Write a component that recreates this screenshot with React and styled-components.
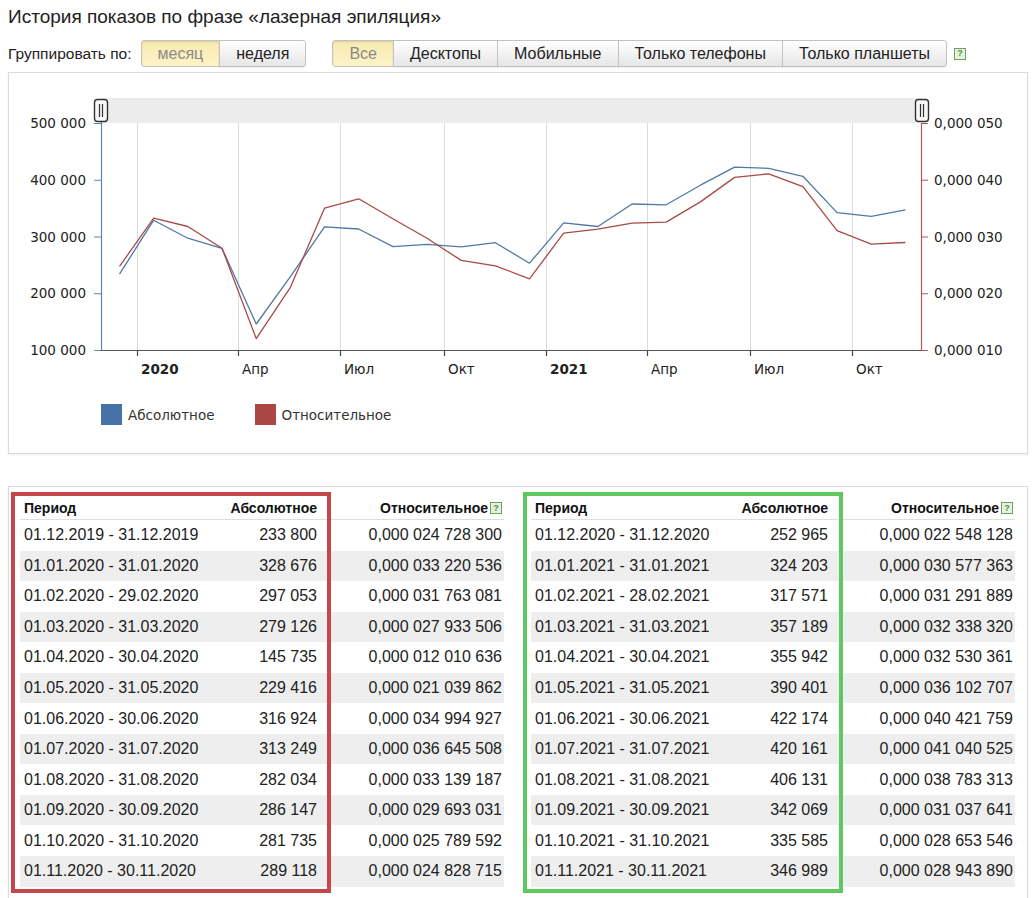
import React from 'react'
import styled, { createGlobalStyle } from 'styled-components'

const GlobalStyle = createGlobalStyle`
  body {
    margin: 0;
    background: #fff;
    color: #222;
    font-family: "Liberation Sans", Arial, sans-serif;
  }
`

const left = [
  ['01.12.2019 - 31.12.2019', '233 800', '0,000 024 728 300'],
  ['01.01.2020 - 31.01.2020', '328 676', '0,000 033 220 536'],
  ['01.02.2020 - 29.02.2020', '297 053', '0,000 031 763 081'],
  ['01.03.2020 - 31.03.2020', '279 126', '0,000 027 933 506'],
  ['01.04.2020 - 30.04.2020', '145 735', '0,000 012 010 636'],
  ['01.05.2020 - 31.05.2020', '229 416', '0,000 021 039 862'],
  ['01.06.2020 - 30.06.2020', '316 924', '0,000 034 994 927'],
  ['01.07.2020 - 31.07.2020', '313 249', '0,000 036 645 508'],
  ['01.08.2020 - 31.08.2020', '282 034', '0,000 033 139 187'],
  ['01.09.2020 - 30.09.2020', '286 147', '0,000 029 693 031'],
  ['01.10.2020 - 31.10.2020', '281 735', '0,000 025 789 592'],
  ['01.11.2020 - 30.11.2020', '289 118', '0,000 024 828 715'],
]

const right = [
  ['01.12.2020 - 31.12.2020', '252 965', '0,000 022 548 128'],
  ['01.01.2021 - 31.01.2021', '324 203', '0,000 030 577 363'],
  ['01.02.2021 - 28.02.2021', '317 571', '0,000 031 291 889'],
  ['01.03.2021 - 31.03.2021', '357 189', '0,000 032 338 320'],
  ['01.04.2021 - 30.04.2021', '355 942', '0,000 032 530 361'],
  ['01.05.2021 - 31.05.2021', '390 401', '0,000 036 102 707'],
  ['01.06.2021 - 30.06.2021', '422 174', '0,000 040 421 759'],
  ['01.07.2021 - 31.07.2021', '420 161', '0,000 041 040 525'],
  ['01.08.2021 - 31.08.2021', '406 131', '0,000 038 783 313'],
  ['01.09.2021 - 30.09.2021', '342 069', '0,000 031 037 641'],
  ['01.10.2021 - 31.10.2021', '335 585', '0,000 028 653 546'],
  ['01.11.2021 - 30.11.2021', '346 989', '0,000 028 943 890'],
]

const rows = [...left, ...right]
const num = (s) => parseFloat(s.replace(/ /g, '').replace(',', '.'))

// chart geometry (page coords)
const PL = 101, PR = 921, PT = 124, PB = 351
const absY = (v) => PB - ((v - 100000) / 400000) * (PB - PT)
const relY = (v) => PB - ((v - 0.00001) / 0.00004) * (PB - PT)
const ptX = (i) => 119.5 + i * 34.17

const absPath = rows.map((r, i) => `${i ? 'L' : 'M'}${ptX(i).toFixed(1)},${absY(num(r[1])).toFixed(1)}`).join(' ')
const relPath = rows.map((r, i) => `${i ? 'L' : 'M'}${ptX(i).toFixed(1)},${relY(num(r[2])).toFixed(1)}`).join(' ')

const months = [
  [137, '2020', true], [238, 'Апр'], [340, 'Июл'], [444, 'Окт'],
  [546, '2021', true], [647, 'Апр'], [750, 'Июл'], [852, 'Окт'],
]
const leftTicks = ['500 000', '400 000', '300 000', '200 000', '100 000']
const rightTicks = ['0,000 050', '0,000 040', '0,000 030', '0,000 020', '0,000 010']

const Page = styled.div`
  width: 1020px;
  padding: 7px 7px 0 8px;
`

const Title = styled.h1`
  margin: 0;
  font-size: 19px;
  line-height: 20px;
  font-weight: normal;
  color: #222;
`

const Toolbar = styled.div`
  display: flex;
  align-items: center;
  margin-top: 13px;
  height: 27px;
`

const Label = styled.span`
  font-size: 15.5px;
  margin-right: 9px;
`

const Group = styled.div`
  display: flex;
  & + & {
    margin-left: 26px;
  }
`

const Button = styled.button`
  height: 27px;
  padding: 0 16px;
  font-family: "Liberation Sans", Arial, sans-serif;
  font-size: 16px;
  color: ${(p) => (p.$active ? '#8a8a8a' : '#222')};
  border: 1px solid #c2c2c2;
  background: ${(p) => (p.$active ? 'linear-gradient(#f9eab0, #fdf3c8)' : 'linear-gradient(#ffffff, #e6e6e6)')};
  box-shadow: ${(p) => (p.$active ? 'inset 0 1px 2px rgba(0,0,0,0.12)' : '0 1px 0 rgba(0,0,0,0.06)')};
  margin-left: -1px;
  border-radius: 0;
  cursor: pointer;
  &:first-child {
    margin-left: 0;
    border-radius: 3px 0 0 3px;
  }
  &:last-child {
    border-radius: 0 3px 3px 0;
  }
`

const Help = styled.span`
  display: inline-flex;
  align-items: center;
  justify-content: center;
  width: 10px;
  height: 10px;
  border: 1px solid #6f9f62;
  background: #e6f2de;
  color: #4f8a42;
  font-size: 9px;
  font-weight: bold;
  line-height: 1;
  margin-left: ${(p) => p.$gap || 0}px;
  flex: none;
`

const Panel = styled.div`
  border: 1px solid #dadada;
  box-shadow: 0 1px 2px rgba(0, 0, 0, 0.08);
  background: #fff;
`

const ChartPanel = styled(Panel)`
  margin-top: 5px;
  padding-bottom: 28px;
`

const ChartSvg = styled.svg`
  display: block;
  font-family: "DejaVu Sans", Verdana, sans-serif;
`

const Legend = styled.div`
  display: flex;
  gap: 40px;
  margin-top: 11px;
  padding-left: 92px;
  font-family: "DejaVu Sans", Verdana, sans-serif;
  font-size: 13.5px;
  color: #333;
`

const LegendItem = styled.div`
  display: flex;
  align-items: center;
  gap: 6px;
  height: 21px;
`

const Swatch = styled.span`
  width: 21px;
  height: 21px;
  background: ${(p) => p.$color};
`

const TablesPanel = styled(Panel)`
  margin-top: 32px;
  padding: 10px 12px 12px 11px;
  display: grid;
  grid-template-columns: 484px 484px;
  gap: 27px;
`

const TableWrap = styled.div`
  position: relative;
`

const Row = styled.div`
  display: grid;
  grid-template-columns: 190px 111px 183px;
  align-items: center;
  height: ${(p) => (p.$head ? '23px' : '30.55px')};
  background: ${(p) => (p.$odd ? '#eeeeee' : 'transparent')};
  border-bottom: ${(p) => (p.$head ? '1px solid #dedede' : 'none')};
  box-sizing: border-box;
  font-size: ${(p) => (p.$head ? '14px' : '16px')};
  font-weight: ${(p) => (p.$head ? 'bold' : 'normal')};
  color: ${(p) => (p.$head ? '#111' : '#222')};
`

const Cell = styled.div`
  display: flex;
  align-items: center;
  justify-content: ${(p) => (p.$right ? 'flex-end' : 'flex-start')};
  padding: 0 ${(p) => (p.$pr ?? 4)}px 0 4px;
  white-space: nowrap;
`

const Highlight = styled.div`
  position: absolute;
  left: ${(p) => p.$left}px;
  top: -5px;
  width: 320px;
  height: 401px;
  box-sizing: border-box;
  border: 4px solid ${(p) => p.$color};
  pointer-events: none;
`

const Handle = ({ x }) => (
  <g>
    <rect x={x - 6.5} y={100.5} width={13} height={22} rx={3} fill="#f7f7f7" stroke="#333" strokeWidth={1.4} />
    <line x1={x - 1.5} y1={105} x2={x - 1.5} y2={118} stroke="#333" strokeWidth={1.2} />
    <line x1={x + 1.5} y1={105} x2={x + 1.5} y2={118} stroke="#333" strokeWidth={1.2} />
  </g>
)

const Chart = () => (
  <ChartSvg width="1018" height="320" viewBox="9 74 1018 320">
    <rect x={PL} y={99} width={PR - PL} height={PT - 99} fill="#ececec" />
    {months.map(([x]) => (
      <line key={'g' + x} x1={x + 0.5} y1={PT} x2={x + 0.5} y2={PB} stroke="#dcdcdc" strokeWidth={1} />
    ))}
    {months.map(([x]) => (
      <line key={'t' + x} x1={x + 0.5} y1={PB} x2={x + 0.5} y2={357} stroke="#444" strokeWidth={1.2} />
    ))}
    <line x1={PL} y1={PB + 0.5} x2={PR} y2={PB + 0.5} stroke="#555" strokeWidth={1.2} />
    <line x1={PL + 0.5} y1={PT - 2} x2={PL + 0.5} y2={PB} stroke="#5f86ad" strokeWidth={1.2} />
    <line x1={PR + 0.5} y1={PT} x2={PR + 0.5} y2={PB} stroke="#aa5a57" strokeWidth={1.2} />
    {leftTicks.map((t, i) => {
      const y = PT + i * ((PB - PT) / 4)
      return (
        <g key={t}>
          <line x1={94} y1={y + 0.5} x2={PL} y2={y + 0.5} stroke="#5f86ad" />
          <text x={86} y={y + 5} fontSize="13.5" fill="#222" textAnchor="end">{t}</text>
        </g>
      )
    })}
    {rightTicks.map((t, i) => {
      const y = PT + i * ((PB - PT) / 4)
      return (
        <g key={t}>
          <line x1={PR} y1={y + 0.5} x2={928} y2={y + 0.5} stroke="#aa5a57" />
          <text x={934} y={y + 5} fontSize="13.5" fill="#222">{t}</text>
        </g>
      )
    })}
    {months.map(([x, label, bold]) => (
      <text key={'l' + x} x={x + 4} y={375} fontSize="13.5" fill="#222" fontWeight={bold ? 'bold' : 'normal'}>
        {label}
      </text>
    ))}
    <path d={absPath} fill="none" stroke="#4f79a5" strokeWidth={1.3} strokeLinejoin="round" />
    <path d={relPath} fill="none" stroke="#a84a47" strokeWidth={1.3} strokeLinejoin="round" />
    <Handle x={101} />
    <Handle x={922} />
  </ChartSvg>
)

const DataTable = ({ data, frame, frameLeft }) => (
  <TableWrap>
    <Row $head>
      <Cell>Период</Cell>
      <Cell $right>Абсолютное</Cell>
      <Cell $right $pr={2}>
        Относительное<Help $gap={2}>?</Help>
      </Cell>
    </Row>
    {data.map((r, i) => (
      <Row key={r[0]} $odd={i % 2 === 1}>
        <Cell>{r[0]}</Cell>
        <Cell $right>{r[1]}</Cell>
        <Cell $right $pr={2}>{r[2]}</Cell>
      </Row>
    ))}
    <Highlight $color={frame} $left={frameLeft} />
  </TableWrap>
)

const App = () => (
  <Page>
    <GlobalStyle />
    <Title>История показов по фразе «лазерная эпиляция»</Title>
    <Toolbar>
      <Label>Группировать по:</Label>
      <Group>
        <Button $active>месяц</Button>
        <Button>неделя</Button>
      </Group>
      <Group>
        <Button $active>Все</Button>
        <Button>Десктопы</Button>
        <Button>Мобильные</Button>
        <Button>Только телефоны</Button>
        <Button>Только планшеты</Button>
      </Group>
      <Help $gap={7}>?</Help>
    </Toolbar>

    <ChartPanel>
      <Chart />
      <Legend>
        <LegendItem>
          <Swatch $color="#4572a7" />
          Абсолютное
        </LegendItem>
        <LegendItem>
          <Swatch $color="#aa4643" />
          Относительное
        </LegendItem>
      </Legend>
    </ChartPanel>

    <TablesPanel>
      <DataTable data={left} frame="#c4474b" frameLeft={-9} />
      <DataTable data={right} frame="#5fc85f" frameLeft={-8} />
    </TablesPanel>
  </Page>
)

export default App
